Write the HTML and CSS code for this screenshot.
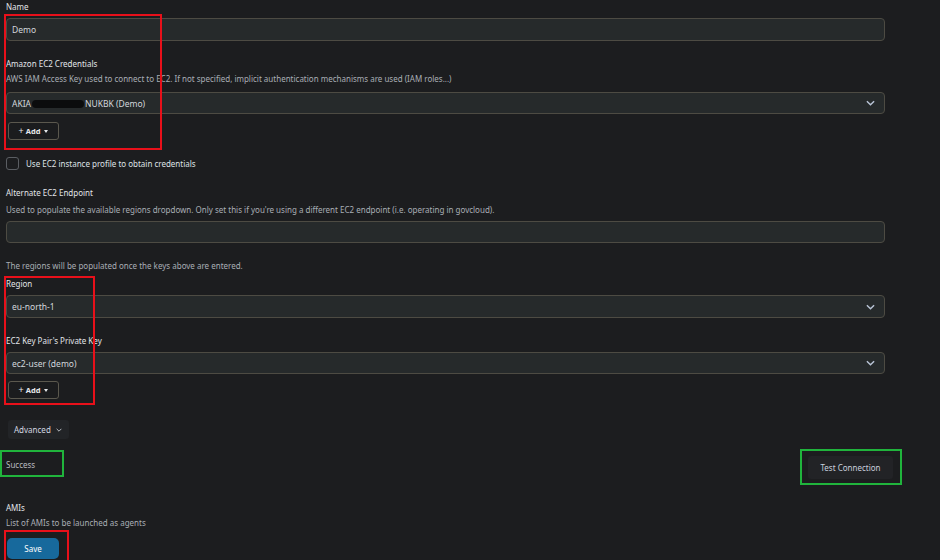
FILE: index.html
```html
<!DOCTYPE html>
<html lang="en">
<head>
    <meta charset="UTF-8">
    <meta name="viewport" content="width=device-width, initial-scale=1.0">
    <title>Cloud configuration</title>
    <link rel="stylesheet" href="styles.css">
</head>
<body>
    <form class="cloud-form">
        <div class="label">Name</div>
        <div class="text-box">Demo</div>

        <div class="label gap-lg">Amazon EC2 Credentials</div>
        <div class="help">AWS IAM Access Key used to connect to EC2. If not specified, implicit authentication mechanisms are used (IAM roles...)</div>
        <div class="select-box cred-select">
            <span>AKIA<span class="blur"></span>NUKBK (Demo)</span>
            <svg class="chevron" viewBox="0 0 10 6"><path d="M1 1l4 4 4-4" fill="none" stroke="currentColor" stroke-width="1.6"/></svg>
        </div>
        <button type="button" class="add-button"><span class="plus">+</span>Add <span class="caret"></span></button>

        <label class="check-row">
            <span class="checkbox"></span>
            Use EC2 instance profile to obtain credentials
        </label>

        <div class="label gap-md">Alternate EC2 Endpoint</div>
        <div class="help help-wide">Used to populate the available regions dropdown. Only set this if you're using a different EC2 endpoint (i.e. operating in govcloud).</div>
        <div class="text-box endpoint-box"></div>

        <div class="help regions-note">The regions will be populated once the keys above are entered.</div>

        <div class="label region-label">Region</div>
        <div class="select-box">
            <span>eu-north-1</span>
            <svg class="chevron" viewBox="0 0 10 6"><path d="M1 1l4 4 4-4" fill="none" stroke="currentColor" stroke-width="1.6"/></svg>
        </div>

        <div class="label gap-lg">EC2 Key Pair's Private Key</div>
        <div class="select-box key-select">
            <span>ec2-user (demo)</span>
            <svg class="chevron" viewBox="0 0 10 6"><path d="M1 1l4 4 4-4" fill="none" stroke="currentColor" stroke-width="1.6"/></svg>
        </div>
        <button type="button" class="add-button"><span class="plus">+</span>Add <span class="caret"></span></button>

        <button type="button" class="advanced-button">Advanced
            <svg class="small-chevron" viewBox="0 0 10 6"><path d="M1 1l4 4 4-4" fill="none" stroke="currentColor" stroke-width="1.4"/></svg>
        </button>

        <div class="test-row">
            <span class="success">Success</span>
            <button type="button" class="test-button">Test Connection</button>
        </div>

        <div class="label amis-label">AMIs</div>
        <div class="help">List of AMIs to be launched as agents</div>
        <button type="button" class="save-button">Save</button>
    </form>

    <!-- annotation boxes drawn over the form -->
    <div class="mark red mark-creds"></div>
    <div class="mark red mark-region"></div>
    <div class="mark green mark-success"></div>
    <div class="mark green mark-test"></div>
    <div class="mark red mark-save"></div>
</body>
</html>
```

FILE: styles.css
```css
html, body {
    margin: 0;
    padding: 0;
    height: 560px;
    overflow: hidden;
}
body {
    background-color: #1c1d1f;
    font-family: "Segoe UI", "Noto Sans", "Liberation Sans", sans-serif;
    font-size: 8px;
    color: #dfe2e6;
    position: relative;
}
.cloud-form {
    display: flex;
    flex-direction: column;
    align-items: flex-start;
    padding: 1px 0 0 6px;
    width: 879px;
}
.label {
    line-height: 12px;
    color: #e2e5e9;
}
.help {
    line-height: 12px;
    color: #a9aeb5;
    margin-top: 3px;
}
.gap-lg {
    margin-top: 17px;
}
.gap-md {
    margin-top: 17px;
}
.text-box, .select-box {
    box-sizing: border-box;
    width: 879px;
    height: 23px;
    margin-top: 5px;
    background-color: #262a2b;
    border: 1px solid #4d4b43;
    border-radius: 4px;
    color: #d3d7dc;
    font-size: 8.5px;
    display: flex;
    align-items: center;
    justify-content: space-between;
    padding: 0 9px 0 5px;
}
.cred-select {
    margin-top: 7px;
    height: 22px;
}
.blur {
    display: inline-block;
    width: 52px;
    height: 8px;
    margin: 0 1px -1px;
    background-color: #0b0c0d;
    border-radius: 4px;
}
.chevron {
    width: 9px;
    height: 6px;
    color: #b9c4d6;
}
.add-button {
    margin-top: 8px;
    margin-left: 2px;
    height: 18px;
    width: 51px;
    box-sizing: border-box;
    background-color: #1b1c1e;
    border: 1px solid #5b584e;
    border-radius: 3px;
    color: #e6e8eb;
    font-family: inherit;
    font-size: 7.5px;
    font-weight: bold;
    display: flex;
    align-items: center;
    justify-content: center;
    gap: 2px;
    padding: 0;
}
.plus {
    font-weight: normal;
    font-size: 9px;
    margin-top: -1px;
}
.caret {
    width: 0;
    height: 0;
    border-left: 2.5px solid transparent;
    border-right: 2.5px solid transparent;
    border-top: 3px solid #e6e8eb;
    margin-left: 2px;
}
.check-row {
    margin-top: 17px;
    display: flex;
    align-items: center;
    gap: 7px;
    line-height: 13px;
    color: #dfe2e6;
}
.checkbox {
    width: 11px;
    height: 11px;
    border: 1px solid #5b5e63;
    border-radius: 3px;
}
.help-wide {
    margin-top: 5px;
}
.endpoint-box {
    height: 22px;
}
.regions-note {
    margin-top: 17px;
}
.region-label {
    margin-top: 6px;
}
.key-select {
    height: 22px;
}
.key-select + .add-button {
    margin-top: 7px;
}
.advanced-button {
    margin-top: 21px;
    margin-left: 2px;
    height: 19px;
    padding: 0 7px 0 6px;
    background-color: #222427;
    border: none;
    border-radius: 3px;
    color: #d3d8e0;
    font-family: inherit;
    font-size: 8px;
    display: flex;
    align-items: center;
    gap: 5px;
}
.small-chevron {
    width: 6px;
    height: 4px;
}
.test-row {
    margin-top: 17px;
    width: 100%;
    display: flex;
    align-items: center;
    justify-content: space-between;
}
.success {
    color: #b9bcc0;
    margin-top: -7px;
}
.test-button {
    margin-right: -8px;
    width: 85px;
    height: 23px;
    background-color: #222326;
    border: none;
    border-radius: 3px;
    color: #c7d0de;
    font-family: inherit;
    font-size: 8px;
}
.amis-label {
    margin-top: 23px;
}
.help + .save-button {
    margin-top: 9px;
}
.save-button {
    margin-left: 1px;
    width: 52px;
    height: 21px;
    background-color: #17699c;
    border: none;
    border-radius: 5px;
    color: #ffffff;
    font-family: inherit;
    font-size: 8px;
}
.mark {
    position: absolute;
    box-sizing: border-box;
    border: 2px solid;
}
.red {
    border-color: #e8101a;
}
.green {
    border-color: #20b43c;
}
.mark-creds {
    left: 4px;
    top: 14px;
    width: 158px;
    height: 136px;
}
.mark-region {
    left: 4px;
    top: 276px;
    width: 91px;
    height: 129px;
}
.mark-success {
    left: 0;
    top: 450px;
    width: 64px;
    height: 27px;
}
.mark-test {
    left: 800px;
    top: 449px;
    width: 102px;
    height: 36px;
}
.mark-save {
    left: 4px;
    top: 530px;
    width: 65px;
    height: 32px;
}
```
